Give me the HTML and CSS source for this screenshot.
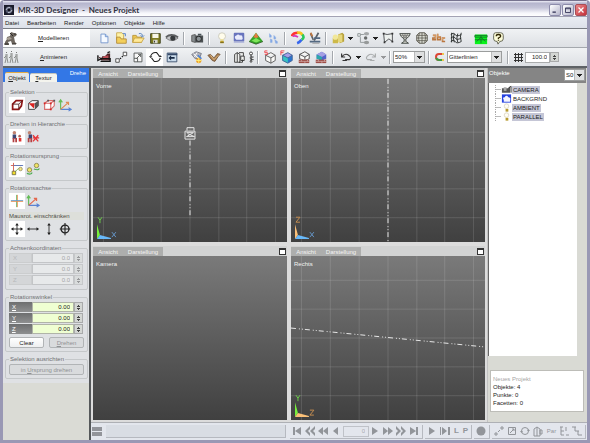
FILE: index.html
```html
<!DOCTYPE html>
<html lang="de">
<head>
<meta charset="utf-8">
<title>MR-3D Designer - Neues Projekt</title>
<link rel="stylesheet" href="styles.css">
</head>
<body>
<div class="window">
<header class="titlebar">
  <svg class="logo" viewBox="0 0 10 10"><rect width="10" height="10" fill="#1a1b2b"/><circle cx="5" cy="5" r="3.4" fill="#555a70"/><path d="M2 5q1-3 4-2.600M8 5q-1 3-4 2.600" stroke="#b8bccb" fill="none"/><circle cx="5" cy="5" r="1.300" fill="#11121c"/></svg>
  <h1>MR-3D Designer &nbsp;- &nbsp;Neues Projekt</h1>
  <div class="winbtns">
    <button class="wb" aria-label="Minimieren"><svg viewBox="0 0 12 12"><path d="M3 8.500h4" stroke="#2c2c50" stroke-width="1.500"/></svg></button>
    <button class="wb" aria-label="Maximieren"><svg viewBox="0 0 12 12"><path d="M3 3.500h6v5.500h-6zM3 4.500h6" stroke="#2c2c50" fill="none"/></svg></button>
    <button class="wb close" aria-label="Schließen"><svg viewBox="0 0 12 12"><path d="M3 3l6 6M9 3l-6 6" stroke="#fff" stroke-width="1.500"/></svg></button>
  </div>
</header>
<nav class="menu"><a href="#">Datei</a><a href="#">Bearbeiten</a><a href="#">Render</a><a href="#">Optionen</a><a href="#">Objekte</a><a href="#">Hilfe</a></nav>

<div class="toolbar">
  <button class="mode on"><svg viewBox="0 0 16 16"><path d="M2 12l2-3V7l3-1 1-4 3 1 3 1-1 2-2 1 1 5 2 2H9l-1-3-3 1 1 3H2z" fill="#6d665f"/><path d="M3 8l4-1 2 2-4 1z" fill="#aaa197"/><path d="M7 3l3 3M1 14h5M9 14h4M12 3v2" stroke="#2e2b29"/></svg><span><u>M</u>odellieren</span></button>
  <button class="tb" aria-label="Neu"><svg viewBox="0 0 16 16"><path d="M4.500 3.500h5l3 3v7h-8z" fill="#f4f9ff" stroke="#7094cc"/><path d="M9.500 3.500v3h3" fill="#b7d2f4" stroke="#7094cc"/></svg></button>
  <button class="tb" aria-label="Projekt öffnen"><svg viewBox="0 0 16 16"><path d="M3 2h6l2 2v6H3z" fill="#fff3a8" stroke="#c8a950"/><path d="M3 7h4l1 2h6v5H3z" fill="#f3cf5b" stroke="#b28a37"/><path d="M10 3h3v3" stroke="#4c7dc8" fill="none"/></svg></button>
  <button class="tb" aria-label="Öffnen"><svg viewBox="0 0 16 16"><path d="M2 5h4l1 2h5v6H2z" fill="#eec750" stroke="#b89335"/><path d="M4 8h11l-3 5H2z" fill="#ffe998" stroke="#c6a348"/><path d="M9 3q4-1 4 3M11 5l2 2 2-2" stroke="#4b79b9" fill="none"/></svg></button>
  <button class="tb" aria-label="Speichern"><svg viewBox="0 0 16 16"><path d="M3 3h11v11H3z" fill="#7e7b20" stroke="#373b16"/><path d="M5 3h7v5H5z" fill="#f7f6e7"/><path d="M6 10h5v4H6z" fill="#d9d9cf"/><path d="M7 11h1v2H7z" fill="#222"/></svg></button>
  <button class="tb" aria-label="Ansicht"><svg viewBox="0 0 16 16"><path d="M1 8q6-6 14 0q-7 6-14 0z" fill="#c3c5c8" stroke="#777"/><circle cx="9" cy="8" r="3" fill="#373a3d"/><path d="M1 7q6-5 14 0" stroke="#5d5f61" fill="none" stroke-width="2"/></svg></button>
  <i class="sep"></i>
  <button class="tb" aria-label="Rendern"><svg viewBox="0 0 16 16"><path d="M2 5l4-1v9l-4-1z" fill="#888e90" stroke="#555"/><path d="M6 5h9v8H6z" fill="#4c5153"/><circle cx="10" cy="9" r="3" fill="#8b9295" stroke="#222"/><path d="M9 3h4v2H9z" fill="#4b5558"/></svg></button>
  <i class="sep"></i>
  <button class="tb" aria-label="Licht"><svg viewBox="0 0 16 16"><circle cx="8" cy="6" r="4" fill="#fffceb" stroke="#c9c8ba"/><path d="M6 9h4l-.5 2h-3z" fill="#eee2a4"/><path d="M6 11h4v3H6z" fill="#c4a72c"/><path d="M6 13h4" stroke="#6d5b20"/></svg></button>
  <button class="tb" aria-label="Hintergrund"><svg viewBox="0 0 16 16"><rect x="2" y="2" width="12" height="10" rx="1" fill="#6874bd"/><path d="M4 9q-2-3 1-4 2-2 4 0 3-1 3 2 1 3-2 3H5z" fill="#e9ebfc"/><path d="M2 13h12" stroke="#a9afd8"/></svg></button>
  <button class="tb" aria-label="Landschaft"><svg viewBox="0 0 16 16"><path d="M0 12l8-10 8 10-8 3z" fill="#35a629"/><path d="M8 2l3 5-3 1-3-1z" fill="#e77941"/><path d="M3 11l5-3 5 3-5 2z" fill="#80e65a"/><path d="M0 12l8 3 8-3" stroke="#385f2d" fill="none"/></svg></button>
  <button class="tb" aria-label="Partikel"><svg viewBox="0 0 16 16"><path d="M4 3l2 2v2H4zM9 5l2 2v2H9zM5 9l2 1v3H5zM10 10l3 2v2h-2z" fill="#85a9e5" stroke="#85a9e5" stroke-width=".5"/></svg></button>
  <i class="sep"></i>
  <button class="tb" aria-label="Material"><svg viewBox="0 0 16 16"><path d="M1 6q1-4 7-4" stroke="#f33" stroke-width="3" fill="none"/><path d="M7 2q5-1 6 3" stroke="#f4c522" stroke-width="3" fill="none"/><path d="M13 4q3 4-1 6" stroke="#29c95c" stroke-width="3" fill="none"/><path d="M12 10q-2 3-5 4" stroke="#3767ee" stroke-width="3" fill="none"/><path d="M2 6q3-1 6 1" stroke="#d335bd" stroke-width="2" fill="none"/></svg></button>
  <button class="tb" aria-label="Werkzeuge"><svg viewBox="0 0 16 16"><path d="M3 3l3 7M12 2L7 11" stroke="#5b626b" stroke-width="2"/><path d="M3 2l2 4" stroke="#bd7843" stroke-width="2"/><path d="M2 12h12M7 8h7" stroke="#536982" stroke-width="2"/><path d="M5 14h8" stroke="#999"/></svg></button>
  <i class="sep slim"></i>
  <button class="tb" aria-label="Körper"><svg viewBox="0 0 16 16"><path d="M2 8h6v6H2z" fill="#cdb949"/><path d="M8 4l5-2 2 2v8l-5 2z" fill="#b7a13b"/><path d="M8 4h5v9H8z" fill="#e6d77c"/><circle cx="5" cy="7" r="3" fill="#f1e799"/></svg></button><button class="drop" aria-label="Körperliste"></button>
  <button class="tb" aria-label="Hierarchie"><svg viewBox="0 0 16 16"><path d="M2 3h3v3H2zM5 4h4M5 7v6h5" stroke="#8c9294" fill="none"/><ellipse cx="12" cy="3" rx="3" ry="2" fill="#a5a8a9"/><circle cx="11" cy="8" r="2" fill="#686b6b"/><ellipse cx="12" cy="13" rx="3" ry="2" fill="#969999"/></svg></button><button class="drop" aria-label="Hierarchieliste"></button>
  <button class="tb" aria-label="Polygon"><svg viewBox="0 0 16 16"><path d="M3 3l4 1 6-1v9l-4-3-5 4z" fill="#edf0ee" stroke="#414447"/><path d="M2 2h2v2H2zM12 2h2v2h-2zM12 11h2v2h-2zM3 12h2v2H3z" fill="#333"/></svg></button>
  <button class="tb" aria-label="Drehkörper"><svg viewBox="0 0 16 16"><path d="M2 3h12q-1 4-5 6v3l3 2H4l3-2V9Q3 7 2 3z" fill="#eef0e6" stroke="#343a36"/><path d="M8 3v10M3 5h10M5 7h6M5 3l2 5M11 3L9 8" stroke="#555" fill="none" stroke-width=".7"/></svg></button>
  <button class="tb" aria-label="Kugel"><svg viewBox="0 0 16 16"><path d="M5 2h6l3 3v6l-3 3H5l-3-3V5z" fill="#dbddd4" stroke="#514f45"/><path d="M8 2v12M2 8h12M5 2q-2 6 0 12M11 2q2 6 0 12M2 5h12M2 11h12" stroke="#514f45" fill="none" stroke-width=".8"/></svg></button>
  <button class="tb" aria-label="Text"><svg viewBox="0 0 16 16"><path d="M1 5h3v5H1V8h3M6.500 3v7h3V7h-3M15 8h-3v4h3" stroke="#b9763f" stroke-width="1.800" fill="none"/><path d="M1 5h3v4M6.500 3v4h3M15 8h-3v3" stroke="#edb77e" stroke-width=".7" fill="none"/></svg></button>
  <button class="tb" aria-label="Gitter"><svg viewBox="0 0 16 16"><path d="M2 4q3-3 5 0t7 0M2 8q3-3 5 0t7 0M2 12q3-3 5 0t7 0M3 2v11M6 3q-2 5 0 10M10 3q-2 5 0 10M14 2q-2 5 0 10" stroke="#202524" fill="none"/></svg></button>
  <i class="space narrow"></i>
  <button class="tb" aria-label="Terrain"><svg viewBox="0 0 16 16"><path d="M1 4h14v11H1z" fill="#08f31b"/><path d="M1 5h14v2H1zM8 5v9M8 7l5 5M8 7l-5 5M1 10h14" fill="none" stroke="#16752a"/></svg></button>
  <button class="tb" aria-label="Hilfe"><svg viewBox="0 0 16 16"><path d="M5 2h6q3 0 3 3v4q0 3-4 3l-2 3-1-3q-4 0-4-3V5q0-3 2-3z" fill="#fcfcd8" stroke="#58594d"/><path d="M6 6q0-2 2.500-2t2.500 2q0 1-2.500 2v1M8.500 10v1" fill="none" stroke="#302500" stroke-width="1.500"/></svg></button>
</div>

<div class="toolbar second">
  <button class="mode"><svg viewBox="0 0 16 16"><path d="M2 14l1-4V5M4 5v4l1 5M7 14l1-4V4M9 4v5l1 5M12 14l1-4V5M14 5v4l1 5M3 7L1 9M8 7L6 9M13 7l-2 2" fill="none" stroke="#8b8e8c"/><path d="M3 3h1v1H3zM8 2h1v1H8zM13 3h1v1h-1z" fill="#777"/></svg><span><u>A</u>nimieren</span></button>
  <button class="tb" aria-label="Kamera"><svg viewBox="0 0 16 16"><path d="M1 7l4 2 1-2h3l3-3h3v8H5z" fill="#4a2325"/><path d="M6 9l2-2 5-1v5H6z" fill="#ba4d54"/><path d="M1 6v6l4-2h10v3H4M12 3l3-1" stroke="#121313" fill="none" stroke-width="1.500"/></svg></button>
  <button class="tb" aria-label="Verschieben"><svg viewBox="0 0 16 16"><path d="M2 10h4v4H2zM10.500 2.500h4v4h-4z" fill="#fff" stroke="#444"/><path d="M7 10l1-1M9 8l1-1" stroke="#111" stroke-width="1.500"/></svg></button>
  <button class="tb" aria-label="Skalieren"><svg viewBox="0 0 16 16"><path d="M3.500 3.500h9v10h-9zM3.500 9.500h4v4M6 10l5-5M8 5h3v3" fill="#f8f8f8" stroke="#4c504f"/></svg></button>
  <button class="tb active" aria-label="Drehen"><svg viewBox="0 0 16 16"><path d="M3 7q2-5 7-4l3 4M14 9q-1 5-7 4L4 9" fill="none" stroke="#222" stroke-width="1.200"/><path d="M1 7h4L3 9zM12 8h4l-2-2z" fill="#222"/></svg></button>
  <button class="tb" aria-label="Fenster"><svg viewBox="0 0 16 16"><path d="M2.500 3.500h11v10h-11z" fill="#cbdcec" stroke="#354968"/><path d="M3 4h11v2H3z" fill="#354968"/><path d="M4 9l3-3v2h4v2H7v2z" fill="#172943"/></svg></button>
  <i class="space narrow"></i>
  <button class="tb" aria-label="Rendermaterial"><svg viewBox="0 0 16 16"><path d="M2 5l5-3 6 2-2 5-5 1z" fill="#b3b5be" stroke="#737682"/><path d="M4 4l5 5M8 3L5 8" stroke="#fff"/><circle cx="10" cy="12" r="3" fill="#eca129"/><path d="M10 8v7M7 12h6" stroke="#fff079"/><path d="M9 6l4 4" stroke="#4e83d7" stroke-width="2"/></svg></button>
  <button class="tb" aria-label="Bewegen"><svg viewBox="0 0 16 16"><path d="M1 6l3-1 4 4 4-5 3 1-2 2-4 6-3-1z" fill="#a67c50" stroke="#74563a"/><path d="M4 6l4 5 5-5" stroke="#e4bf87" fill="none"/></svg></button>
  <i class="sep"></i>
  <button class="tb" aria-label="Kopieren"><svg viewBox="0 0 16 16"><path d="M3 5l3-2v11H3zM6 3l3 2v9H6M10 7h4v5h-4zM8 3h5v4M8 14h4v-3" fill="#f0f1ef" stroke="#333"/></svg></button>
  <button class="tb small" aria-label="Kette"><svg viewBox="0 0 8 16"><path d="M4 4v10M4 8h3M4 11h3" stroke="#292d2b"/><circle cx="4" cy="4" r="1.700" fill="#fff" stroke="#333"/><circle cx="4" cy="9" r="1" fill="#fff" stroke="#333"/><circle cx="4" cy="13" r="1" fill="#fff" stroke="#333"/></svg></button>
  <i class="sep slim"></i>
  <button class="tb" aria-label="Drahtgitter"><svg viewBox="0 0 16 16"><path d="M3 6l6-3 5 3v6l-5 3-6-3zM3 6l6 3 5-3M9 9v6" fill="#f9f9f7" stroke="#555"/><path d="M5 1H2v2h3v2H2" fill="none" stroke="#f24549"/></svg></button>
  <button class="tb" aria-label="Flächen"><svg viewBox="0 0 16 16"><path d="M3 6l6-3 5 3v6l-5 3-6-3z" fill="#2875d0"/><path d="M3 6l6-3 5 3-5 3z" fill="#a69ee7"/><path d="M3 6l6 3v6l-6-3z" fill="#36c1c1"/><path d="M3 6l6-3 5 3v6l-5 3-6-3zM3 6l6 3 5-3" fill="none" stroke="#456593"/><path d="M1 6V1h4M1 3h3" fill="none" stroke="#f24549"/></svg></button>
  <button class="tb" aria-label="Gitterboden"><svg viewBox="0 0 16 16"><path d="M3 5l6-3 5 3v5l-5 2-6-2zM3 5l6 3 5-3M9 8v4" fill="#f9f9f7" stroke="#444"/><path d="M2 11h12v4H2z" fill="#9d4e47"/><path d="M2 13h12M5 11v2M9 13v2M12 11v2" stroke="#e8d0cd" stroke-width=".6"/></svg></button>
  <button class="tb" aria-label="Flächenboden"><svg viewBox="0 0 16 16"><path d="M3 5l6-3 5 3v5l-5 2-6-2z" fill="#5264c8"/><path d="M3 5l6-3 5 3-5 3z" fill="#a59fe3"/><path d="M3 5l6 3v4l-6-2z" fill="#2da7ac"/><path d="M2 11h12v4H2z" fill="#9d4e47"/><path d="M2 13h12M5 11v2M9 13v2M12 11v2" stroke="#e8d0cd" stroke-width=".6"/></svg></button>
  <i class="sep"></i>
  <button class="tb" aria-label="Rückgängig"><svg viewBox="0 0 16 16"><path d="M3 4v4h4M3 8q4-5 8-2t1 5H7M4 12h5" fill="none" stroke="#333" stroke-width="1.300"/></svg></button><button class="drop" aria-label="Rückgängigliste"></button>
  <button class="tb" aria-label="Wiederherstellen" disabled><svg viewBox="0 0 16 16"><path d="M13 4v4H9M13 8Q9 3 5 6t-1 5h5M7 12h5" fill="none" stroke="#a9acad" stroke-width="1.300"/></svg></button><button class="drop off" aria-label="Wiederherstellenliste" disabled></button>
  <i class="sep slim"></i>
  <label class="combo zoomlevel"><select aria-label="Zoom"><option>50%</option></select></label>
  <i class="sep"></i>
  <svg class="magnet" viewBox="0 0 10 10"><path d="M8 2H4q-3 0-3 3t3 3h4" fill="none" stroke="#dc4535" stroke-width="2"/><path d="M8 8H4q-2 0-3-2" fill="none" stroke="#3e9b42" stroke-width="2"/><path d="M8 1v2M8 7v2" stroke="#edc84d" stroke-width="2"/></svg>
  <label class="combo snap"><select aria-label="Fangmodus"><option>Gitterlinien</option></select></label>
  <i class="sep wide"></i>
  <svg class="gridicon" viewBox="0 0 9 9"><path d="M0 1.500h9M0 4.500h9M0 7.500h9M1.500 0v9M4.500 0v9M7.500 0v9" stroke="#333"/></svg>
  <input class="gridsize" aria-label="Rasterweite" value="100.0"><button class="spin" aria-label="Rasterweite ändern"></button>
</div>

<div class="work">
  <aside class="left">
    <div class="tabs"><button class="tab on"><u>O</u>bjekt</button><button class="tab"><u>T</u>extur</button><span>Drehe</span></div>
    <div class="groups">
      <fieldset><legend>Selektion</legend><div class="row">
        <button class="ib on" aria-label="Objekt"><svg viewBox="0 0 16 16"><path d="M3 7l4-4h7l-1 6-3 4H3z" fill="#fff" stroke="#8d1717" stroke-width="2"/><path d="M3 7h7v6M10 7l4-4" stroke="#512323" fill="none"/></svg></button>
        <button class="ib" aria-label="Fläche"><svg viewBox="0 0 16 16"><path d="M3 6l4-3h7v6l-4 4H3z" fill="#f7f7f7" stroke="#333"/><path d="M3 6h7l-1 6z" fill="#db2420"/><path d="M10 6l4-3v6l-4 4z" fill="#555"/></svg></button>
        <button class="ib" aria-label="Punkt"><svg viewBox="0 0 16 16"><path d="M3 6l4-3h7v6l-4 4H3zM3 6h7v7M10 6l4-3" fill="#fff" stroke="#d66d6d" stroke-width="1.300"/><path d="M2 5h2v2H2zM9 5h2v2H9zM9 12h2v2H9z" fill="#d52323"/><path d="M6 2h2v2H6zM13 2h2v2h-2z" fill="#555"/></svg></button>
        <button class="ib" aria-label="Achse"><svg viewBox="0 0 16 16"><path d="M3 13V3M1 5l2-3 2 3" stroke="#63bc55" fill="none" stroke-width="1.300"/><path d="M3 13h11M12 11l3 2-3 2" stroke="#5a83d3" fill="none" stroke-width="1.300"/><path d="M3 13l9-8M9 5h3v3" stroke="#dd8b54" fill="none" stroke-width="1.300"/></svg></button></div></fieldset>
      <fieldset><legend>Drehen in Hierarchie</legend><div class="row">
        <button class="ib on" aria-label="Mit Kindern"><svg viewBox="0 0 16 16"><circle cx="5" cy="3" r="2" fill="#c28370"/><path d="M3 5h4v5H3z" fill="#3c4672"/><path d="M4 9v5M7 9v5" stroke="#b34142" stroke-width="2"/><circle cx="11" cy="7" r="1.500" fill="#b66254"/><path d="M10 9h3v4h-3z" fill="#df3532"/></svg></button>
        <button class="ib" aria-label="Ohne Kinder"><svg viewBox="0 0 16 16"><circle cx="4" cy="3" r="2" fill="#c28370"/><path d="M3 5h4v5H3z" fill="#3c4672"/><path d="M3 9v5M6 9v5" stroke="#b34142" stroke-width="2"/><path d="M8 6l6 7M14 6l-6 7M8 9h7" stroke="#e73336" stroke-width="1.500"/></svg></button></div></fieldset>
      <fieldset><legend>Rotationsursprung</legend><div class="row">
        <button class="ib on" aria-label="Achse"><svg viewBox="0 0 16 16"><path d="M4 1v12M1 4h13" stroke="#d25846"/><path d="M4 4h11" stroke="#5679c2"/><path d="M5 12l5-5" stroke="#76b95b"/><path d="M2.500 10.500h4v4h-4z" fill="#f2dc27" stroke="#72704b"/><circle cx="12" cy="8" r="2" fill="#f6e681" stroke="#9f9464"/></svg></button>
        <button class="ib" aria-label="Objektmitte"><svg viewBox="0 0 16 16"><circle cx="4" cy="9" r="2.500" fill="#f0e464" stroke="#888252"/><circle cx="12" cy="4" r="2.500" fill="#f0e464" stroke="#888252"/><path d="M1 13q5 2 6-1M9 8q6 2 6-1" stroke="#4dae52" fill="none" stroke-width="1.300"/></svg></button></div></fieldset>
      <fieldset><legend>Rotationsachse</legend><div class="row">
        <button class="ib on" aria-label="Weltachse"><svg viewBox="0 0 16 16"><path d="M7.500 1v14" stroke="#60b96c"/><path d="M8.500 1v14" stroke="#eb9057"/><path d="M1 7.500h14" stroke="#5b98d0"/><path d="M1 8.500h14" stroke="#e29258"/></svg></button>
        <button class="ib" aria-label="Objektachse"><svg viewBox="0 0 16 16"><path d="M3 13V3M1 5l2-3 2 3" stroke="#63bc55" fill="none" stroke-width="1.300"/><path d="M3 13h11M12 11l3 2-3 2" stroke="#5a83d3" fill="none" stroke-width="1.300"/><path d="M3 13l9-8M9 5h3v3" stroke="#e3684e" fill="none" stroke-width="1.500"/></svg></button></div>
        <p class="hint">Mausrot. einschränken</p>
        <div class="row">
        <button class="ib on" aria-label="Alle"><svg viewBox="0 0 16 16"><path d="M8 3v10M3 8h10" stroke="#222"/><path d="M8 1l2 3H6zM8 15l2-3H6zM1 8l3-2v4zM15 8l-3-2v4z" fill="#222"/></svg></button>
        <button class="ib" aria-label="Horizontal"><svg viewBox="0 0 16 16"><path d="M3 8h10" stroke="#222"/><path d="M1 8l3-2v4zM15 8l-3-2v4z" fill="#222"/></svg></button>
        <button class="ib" aria-label="Vertikal"><svg viewBox="0 0 16 16"><path d="M8 3v10" stroke="#222"/><path d="M8 1l2 3H6zM8 15l2-3H6z" fill="#222"/></svg></button>
        <button class="ib" aria-label="Kreis"><svg viewBox="0 0 16 16"><circle cx="8" cy="8" r="4.500" fill="none" stroke="#222" stroke-width="1.500"/><path d="M8 1v14M2 8h12" stroke="#222" stroke-width="1.300"/></svg></button></div></fieldset>
      <fieldset class="dim"><legend>Achsenkoordinaten</legend>
        <div class="axis"><label for="ax">X</label><input id="ax" value="0.0" disabled><button class="spin" aria-label="X ändern" disabled></button></div>
        <div class="axis"><label for="ay">Y</label><input id="ay" value="0.0" disabled><button class="spin" aria-label="Y ändern" disabled></button></div>
        <div class="axis"><label for="az">Z</label><input id="az" value="0.0" disabled><button class="spin" aria-label="Z ändern" disabled></button></div></fieldset>
      <fieldset class="angle"><legend>Rotationswinkel</legend>
        <div class="axis"><label for="rx"><u>X</u></label><input id="rx" value="0.00"><button class="spin" aria-label="X-Winkel ändern"></button></div>
        <div class="axis"><label for="ry"><u>Y</u></label><input id="ry" value="0.00"><button class="spin" aria-label="Y-Winkel ändern"></button></div>
        <div class="axis"><label for="rz"><u>Z</u></label><input id="rz" value="0.00"><button class="spin" aria-label="Z-Winkel ändern"></button></div>
        <div class="actions"><button class="push">Clear</button><button class="push" disabled><u>D</u>rehen</button></div></fieldset>
      <fieldset><legend>Selektion ausrichten</legend><div class="actions flat"><button class="push" disabled>in <u>U</u>rsprung drehen</button></div></fieldset>
    </div>
  </aside>

  <div class="center">
    <div class="upper">
    <main class="views">
      <section class="view"><header><button>Ansicht</button><button>Darstellung</button><button class="max" aria-label="Vorne maximieren"></button></header>
        <div class="canvas"><svg viewBox="0 0 195 165" preserveAspectRatio="xMidYMid slice"><path class="grid" d="M10.500 0v165M39.500 0v165M68.500 0v165M97.500 0v165M126.500 0v165M154.500 0v165M183.500 0v165M0 25.500h195M0 54.500h195M0 83.500h195M0 111.500h195M0 140.500h195"/><path class="ray" d="M97.500 63v77"/><path d="M92.500 53.500h10v8h-10zM94.500 53v-3h7v3M94 55h7l-7 4h8l-7-3" fill="none" stroke="#e6e6e6"/><path d="M4 147l3 11-3 4z" fill="#77f03c"/><path d="M4 162l3-4 11 3v1z" fill="#68b8f8"/><path d="M5 140l2 3 2-3M7 143v3" stroke="#6ac94a" fill="none"/><path d="M19 155l4 5M23 155l-4 5" stroke="#6595c7"/></svg><span>Vorne</span></div></section>
      <section class="view"><header><button>Ansicht</button><button>Darstellung</button><button class="max" aria-label="Oben maximieren"></button></header>
        <div class="canvas"><svg viewBox="0 0 195 165" preserveAspectRatio="xMidYMid slice"><path class="grid" d="M10.500 0v165M39.500 0v165M68.500 0v165M97.500 0v165M126.500 0v165M154.500 0v165M183.500 0v165M0 25.500h195M0 54.500h195M0 83.500h195M0 111.500h195M0 140.500h195"/><path class="ray" d="M97.500 1v164"/><path d="M4 147l3 11-3 4z" fill="#fbc078"/><path d="M4 162l3-4 11 3v1z" fill="#68b8f8"/><path d="M5 140h4l-4 5h4" stroke="#c28b50" fill="none"/><path d="M19 155l4 5M23 155l-4 5" stroke="#6595c7"/></svg><span>Oben</span></div></section>
      <section class="view"><header><button>Ansicht</button><button>Darstellung</button><button class="max" aria-label="Kamera maximieren"></button></header>
        <div class="canvas"><span>Kamera</span></div></section>
      <section class="view"><header><button>Ansicht</button><button>Darstellung</button><button class="max" aria-label="Rechts maximieren"></button></header>
        <div class="canvas"><svg viewBox="0 0 195 165" preserveAspectRatio="xMidYMid slice"><path class="grid" d="M10.500 0v165M39.500 0v165M68.500 0v165M97.500 0v165M126.500 0v165M154.500 0v165M183.500 0v165M0 24.500h195M0 53.500h195M0 82.500h195M0 111.500h195M0 140.500h195"/><path class="ray" d="M0 72.500l195 19"/><path d="M4 147l3 11-3 4z" fill="#77f03c"/><path d="M4 162l3-4 11 3v1z" fill="#fbc078"/><path d="M5 140l2 3 2-3M7 143v3" stroke="#6ac94a" fill="none"/><path d="M19 155h4l-4 5h4" stroke="#c28b50" fill="none"/></svg><span>Rechts</span></div></section>
    </main>
    <aside class="objects">
      <header><span>Objekte</span><label class="combo"><select aria-label="Szene"><option>S0</option></select></label></header>
      <ul class="tree">
        <li><svg viewBox="0 0 12 9"><path d="M1 3h7l2-2v7H1z" fill="#555"/><path d="M3 2h3v4H3z" fill="#aaa"/><path d="M8 3l3-2v7" stroke="#333" fill="none"/></svg><b class="sel">CAMERA</b></li>
        <li><svg viewBox="0 0 12 9"><rect x="1" width="10" height="9" fill="#2642df"/><path d="M3 6q-2-3 1-3 2-3 4 0 3 0 2 3v2H3z" fill="#f4f5ff"/></svg><b>BACKGRND</b></li>
        <li><svg viewBox="0 0 12 9"><circle cx="6" cy="3" r="2.500" fill="#fffdf2" stroke="#ddd8c9"/><path d="M5 6h3v3H5z" fill="#b79a2f"/></svg><b class="sel">AMBIENT</b></li>
        <li><svg viewBox="0 0 12 9"><circle cx="6" cy="3" r="2.500" fill="#fffdf2" stroke="#ddd8c9"/><path d="M5 6h3v3H5z" fill="#b79a2f"/></svg><b class="sel">PARALLEL</b></li>
      </ul>
      <div class="info"><p class="name">Neues Projekt</p><p>Objekte: 4</p><p>Punkte: 0</p><p>Facetten: 0</p></div>
    </aside>
    </div>
    <footer class="timeline">
      <button class="layout" aria-label="Layout"></button>
      <div class="slot"></div>
      <div class="play">
        <button aria-label="Anfang"><svg viewBox="0 0 12 12"><path d="M2 2h2v8H2zM10 2v8L4 6z"/></svg></button>
        <button aria-label="Schlüssel zurück"><svg viewBox="0 0 12 12"><path d="M6 1v3l-2 2 2 2v3L1 6zM11 1v3L9 6l2 2v3L6 6z"/></svg></button>
        <button aria-label="Schnell zurück"><svg viewBox="0 0 12 12"><path d="M6 2v8L1 6zM11 2v8L6 6z"/></svg></button>
        <button aria-label="Zurück"><svg viewBox="0 0 12 12"><path d="M8 2v8L3 6z"/></svg></button>
        <input aria-label="Bild" value="0">
        <button aria-label="Vor"><svg viewBox="0 0 12 12"><path d="M3 2v8l6-4z"/></svg></button>
        <button aria-label="Schnell vor"><svg viewBox="0 0 12 12"><path d="M1 2v8l5-4zM6 2v8l5-4z"/></svg></button>
        <button aria-label="Schlüssel vor"><svg viewBox="0 0 12 12"><path d="M1 1v3l2 2-2 2v3l5-5zM6 1v3l2 2-2 2v3l5-5z"/></svg></button>
        <button aria-label="Ende"><svg viewBox="0 0 12 12"><path d="M2 2v8l6-4zM8 2h2v8H8z"/></svg></button>
      </div>
      <div class="play">
        <button aria-label="Abspielen"><svg viewBox="0 0 12 12"><path d="M3 2v8l6-4z"/></svg></button>
        <button aria-label="Bereich"><svg viewBox="0 0 12 12"><path d="M1 2h1v8H1zM3 2v8l5-4zM9 2h2v8H9z"/></svg></button>
        <button class="letter">L</button><button class="letter">P</button>
      </div>
      <div class="play"><button aria-label="Aufnahme"><svg viewBox="0 0 12 12"><circle cx="6" cy="6" r="4.500"/></svg></button></div>
      <div class="play keys">
        <button aria-label="Position"><svg viewBox="0 0 12 12"><path d="M2 8h2v2H2zM8 2h2v2H8zM5 7l2-2" class="ln"/></svg></button>
        <button aria-label="Größe"><svg viewBox="0 0 12 12"><path d="M2.500 2.500h7v7h-7zM4 8l4-4M6 4h2v2" class="ln"/></svg></button>
        <button aria-label="Drehung"><svg viewBox="0 0 12 12"><circle cx="6" cy="6" r="3.500" class="ln"/><path d="M1 6h3L2.500 8zM8 6h3L9.500 4z"/></svg></button>
        <button aria-label="Form"><svg viewBox="0 0 12 12"><path d="M2 4l3-2v9H2zM5 2l3 2v7H5M8 5h2v4H8z" class="ln"/></svg></button>
        <button class="par">Par</button>
        <button aria-label="Hierarchie"><svg viewBox="0 0 12 12"><path d="M2 2h3M3 2v8M3 6h3M3 10h3M8 2v4M8 10h3" class="ln"/></svg></button>
        <button aria-label="Gruppe"><svg viewBox="0 0 12 12"><path d="M1 2h4M4 2v4h4M7 6v4h4" class="ln"/></svg></button>
      </div>
    </footer>
  </div>
</div>
</div>
</body>
</html>
```
FILE: styles.css
```css
* { box-sizing: border-box; }
body { margin: 0; background: #fff; font: 6px/8px "Liberation Sans", sans-serif; color: #222; }
button, input, select { font: inherit; color: inherit; margin: 0; padding: 0; border: 0; border-radius: 0; background: none; }
p, h1, ul { margin: 0; padding: 0; }
svg { display: block; }
a { color: inherit; text-decoration: none; }

.window { display: flex; flex-direction: column; min-height: 100vh; border: solid #9998b4; border-width: 0 3px 3px; border-radius: 4px 4px 0 0; background: #dcdfe3; overflow: hidden; }

.titlebar { display: flex; align-items: center; gap: 4px; height: 17px; padding: 2px 0 0 1px; border-top: 1px solid #77738f; border-bottom: 1px solid #a3a2b4; background: linear-gradient(#eeeef8, #b5b5cd 15%, #c5c5d9 45%, #f6f6fb 80%, #fff); }
.logo { width: 10px; height: 10px; }
.titlebar h1 { flex: 1; font: bold 8px/10px Lato, sans-serif; color: #30303c; white-space: nowrap; }
.winbtns { display: flex; gap: 1px; }
.wb { width: 12px; height: 12px; border: 1px solid #8d8cab; border-radius: 2px; background: linear-gradient(135deg, #fff, #b5b5cb); }
.wb.close { border-color: #a94d55; background: linear-gradient(135deg, #ea8b8b, #c52f3a); }

.menu { display: flex; gap: 8px; height: 12px; padding: 2px 0 2px 2px; background: linear-gradient(#e9edf3, #dde1e9); border-bottom: 1px solid #797d83; }

.toolbar { display: flex; align-items: center; height: 19px; border-bottom: 1px solid #a4a8ad; background: linear-gradient(#f0f2f4, #dde0e4); }
.toolbar.second { height: 20px; border-bottom: 2px solid #5e6266; }
.mode { display: flex; align-items: center; flex: none; width: 87px; height: 18px; margin-right: 5px; }
.mode.on { background: #fff; }
.mode svg { width: 16px; height: 16px; }
.mode span { flex: 1; padding-right: 2px; text-align: center; }
.tb { flex: none; width: 17px; height: 17px; }
.tb svg { width: 14px; height: 14px; margin: auto; }
.tb.small { width: 8px; }
.tb.small svg { width: 8px; }
.tb.active { background: #fff; }
.sep { flex: none; width: 8px; height: 13px; background: linear-gradient(90deg, #a4a8ad 50%, #fff 50%) center / 2px 100% no-repeat; }
.sep.slim { width: 6px; }
.sep.wide { width: 12px; }
.space { flex: none; width: 10px; }
.space.narrow { width: 8px; }
.drop { flex: none; width: 8px; height: 16px; background: linear-gradient(#222, #222) center 7px / 5px 1px no-repeat, linear-gradient(#222, #222) center 8px / 3px 1px no-repeat, linear-gradient(#222, #222) center 9px / 1px 1px no-repeat; }
.drop.off { opacity: .4; }

.combo { position: relative; display: block; flex: none; height: 12px; border: 1px solid #9b9d9d; background: #fff; color: #222; }
.combo select { display: block; width: 100%; height: 10px; padding: 0 0 0 1px; appearance: none; line-height: 10px; }
.combo::after { content: ""; position: absolute; top: 0; right: 0; width: 9px; height: 10px; pointer-events: none; border-left: 1px solid #b9babb; background: linear-gradient(#222, #222) 2px 4px / 5px 1px no-repeat, linear-gradient(#222, #222) 3px 5px / 3px 1px no-repeat, linear-gradient(#222, #222) 4px 6px / 1px 1px no-repeat, #dedfe0; }
.zoomlevel { width: 32px; }
.snap { width: 55px; }
.magnet { flex: none; width: 10px; height: 10px; margin: 0 2px; }
.gridicon { flex: none; width: 9px; height: 9px; margin-right: 2px; }
.gridsize { width: 25px; height: 11px; padding-right: 2px; border: 1px solid #aaacad; background: #fff; text-align: right; }
.spin { flex: none; width: 9px; height: 10px; border: 1px solid #a9aaab; background: conic-gradient(from 135deg at 50% 1px, #444 90deg, transparent 0) 1px 1px / 5px 3px no-repeat, conic-gradient(from -45deg at 50% 2px, #444 90deg, transparent 0) 1px 5px / 5px 3px no-repeat, #d3d6d3; }

.work { display: flex; flex: 1; }
.left { flex: none; width: 86px; background: #dadbd5; }
.tabs { display: flex; align-items: flex-end; height: 14px; padding-left: 2px; background: #3377e6; color: #fff; }
.tab { height: 9px; width: 24px; border-top: 1px solid #c2c4be; border-radius: 2px 2px 0 0; background: #f4f4ee; color: #222; line-height: 8px; }
.tab + .tab { width: 27px; margin-left: 1px; }
.tab.on { height: 10px; border-top-color: #e2aa46; background: #e3e5e6; }
.tabs span { flex: 1; align-self: flex-start; padding: 1px 3px 0 0; text-align: right; }
.groups { display: grid; gap: 3px; padding: 6px 1px 4px 2px; background: #dfe1e4; }
fieldset { min-width: 0; margin: 0; padding: 1px 3px 3px; border: 1px solid #c5c8ca; border-radius: 2px; }
legend { height: 8px; padding: 0 1px; color: #6d7072; }
.row { display: flex; }
.ib { width: 16px; height: 16px; }
.ib svg { width: 14px; height: 14px; margin: auto; }
.ib.on { background: #fff; }
.hint { margin: 3px 0 1px; color: #4e4e46; background: #dddfda; }
.axis { display: flex; height: 11px; padding-bottom: 1px; }
.axis label { width: 23px; padding-left: 3px; line-height: 8px; color: #b6b8ba; background: #d4d6d8; border: 1px solid #cbcdce; }
.axis input { width: 42px; height: 10px; padding-right: 3px; border: 1px solid #c3c5c7; text-align: right; color: #a4a6a8; background: #e7e9ea; }
.axis .spin:disabled { opacity: .45; }
.angle .axis label { color: #fff; border: 0; background: linear-gradient(#6d6e6f, #8e8f90); line-height: 10px; }
.angle .axis input { color: #222; background: #efffd2; border-color: #b0b4a8; }
.actions { display: flex; gap: 5px; margin-top: 2px; }
.actions.flat { margin-top: 0; }
.push { flex: 1; height: 11px; border: 1px solid #b1b4b6; border-radius: 2px; background: linear-gradient(#fff, #eeeff0); line-height: 8px; color: #222; }
.push:disabled { background: #d9dbdd; color: #909294; }

.center { display: flex; flex-direction: column; flex: 1; min-width: 0; border-left: 2px solid #55585a; background: #dcdee2; }
.upper { display: flex; flex: 1; }
.views { display: grid; grid-template: 1fr 1fr / 1fr 1fr; gap: 4px; flex: 1; padding: 0 2px 2px; background: #dcdcdc; }
.view { display: flex; flex-direction: column; min-width: 0; }
.view header { display: flex; height: 10px; padding-top: 1px; background: #d2d3d3; }
.view header button { width: 30px; color: #f4f4f4; background: #adaead; line-height: 8px; }
.view header button + button { width: 40px; }
.view header button.max { width: 7px; height: 7px; margin: 1px 1px 0 auto; border: 1px solid #333; border-top-width: 2px; background: #fff; }
.canvas { position: relative; flex: 1; background: linear-gradient(#7a7a7a, #404040); overflow: hidden; }
.canvas svg { position: absolute; inset: 0; width: 100%; height: 100%; }
.canvas span { position: absolute; top: 4px; left: 3px; color: #f2f2f2; }
.grid { stroke: #fff; stroke-opacity: .13; fill: none; }
.ray { stroke: #e8e8e8; fill: none; stroke-dasharray: 5 3 1 2 1 2; }

.objects { display: flex; flex-direction: column; flex: none; width: 100px; padding-bottom: 10px; border-left: 1px solid #c2c2c2; background: #d9dad4; }
.objects header { display: flex; justify-content: space-between; height: 15px; padding: 1px 1px 2px; margin-right: 1px; background: #858585; color: #fff; }
.objects header .combo { width: 21px; }
.tree { flex: 1; margin: 0 10px 14px 0; padding: 2px 0 0 12px; border-left: 1px solid #666; background: #fff; list-style: none; }
.tree li { display: flex; align-items: center; height: 9px; margin-left: -6px; }
.tree li::before { content: ""; width: 5px; height: 9px; border-left: 1px dotted #aaa; background: linear-gradient(#bbb, #bbb) left center / 100% 1px no-repeat; }
.tree svg { width: 11px; height: 9px; }
.tree b { padding: 0 1px; font-weight: normal; color: #222; }
.tree .sel { background: #c5c6d6; }
.info { margin: 0 3px 0 2px; padding: 4px 1px 4px 2px; border: 1px solid #bdbdb8; background: #fff; }
.info .name { color: #a6a6a6; }

.timeline { display: flex; align-items: center; height: 18px; padding: 1px 1px; border-top: 1px solid #aeb0b5; background: #e3e6ed; }
.timeline .layout { width: 10px; height: 9px; background: linear-gradient(#92949a 4px, #e3e6ed 4px 5px, #92949a 5px); }
.slot { flex: 1; height: 13px; margin: 0 4px 0 4px; border: solid #b6b9c0; border-width: 0 1px 1px 0; background: #d9dde4; }
.play { display: flex; align-items: center; height: 14px; padding: 0 1px; margin-right: 2px; border: solid #b6b9c0; border-width: 0 1px 1px 0; }
.play button { width: 13px; height: 12px; color: #92959a; }
.play svg { width: 12px; height: 12px; fill: #92959a; }
.play .ln { fill: none; stroke: #92959a; }
.play input { width: 26px; height: 11px; padding-right: 3px; border: 1px solid #bfc2c8; color: #a9acb1; text-align: right; }
.play .letter { width: 9px; font-size: 8px; font-weight: bold; }
.play.keys { margin-right: 0; }
```
